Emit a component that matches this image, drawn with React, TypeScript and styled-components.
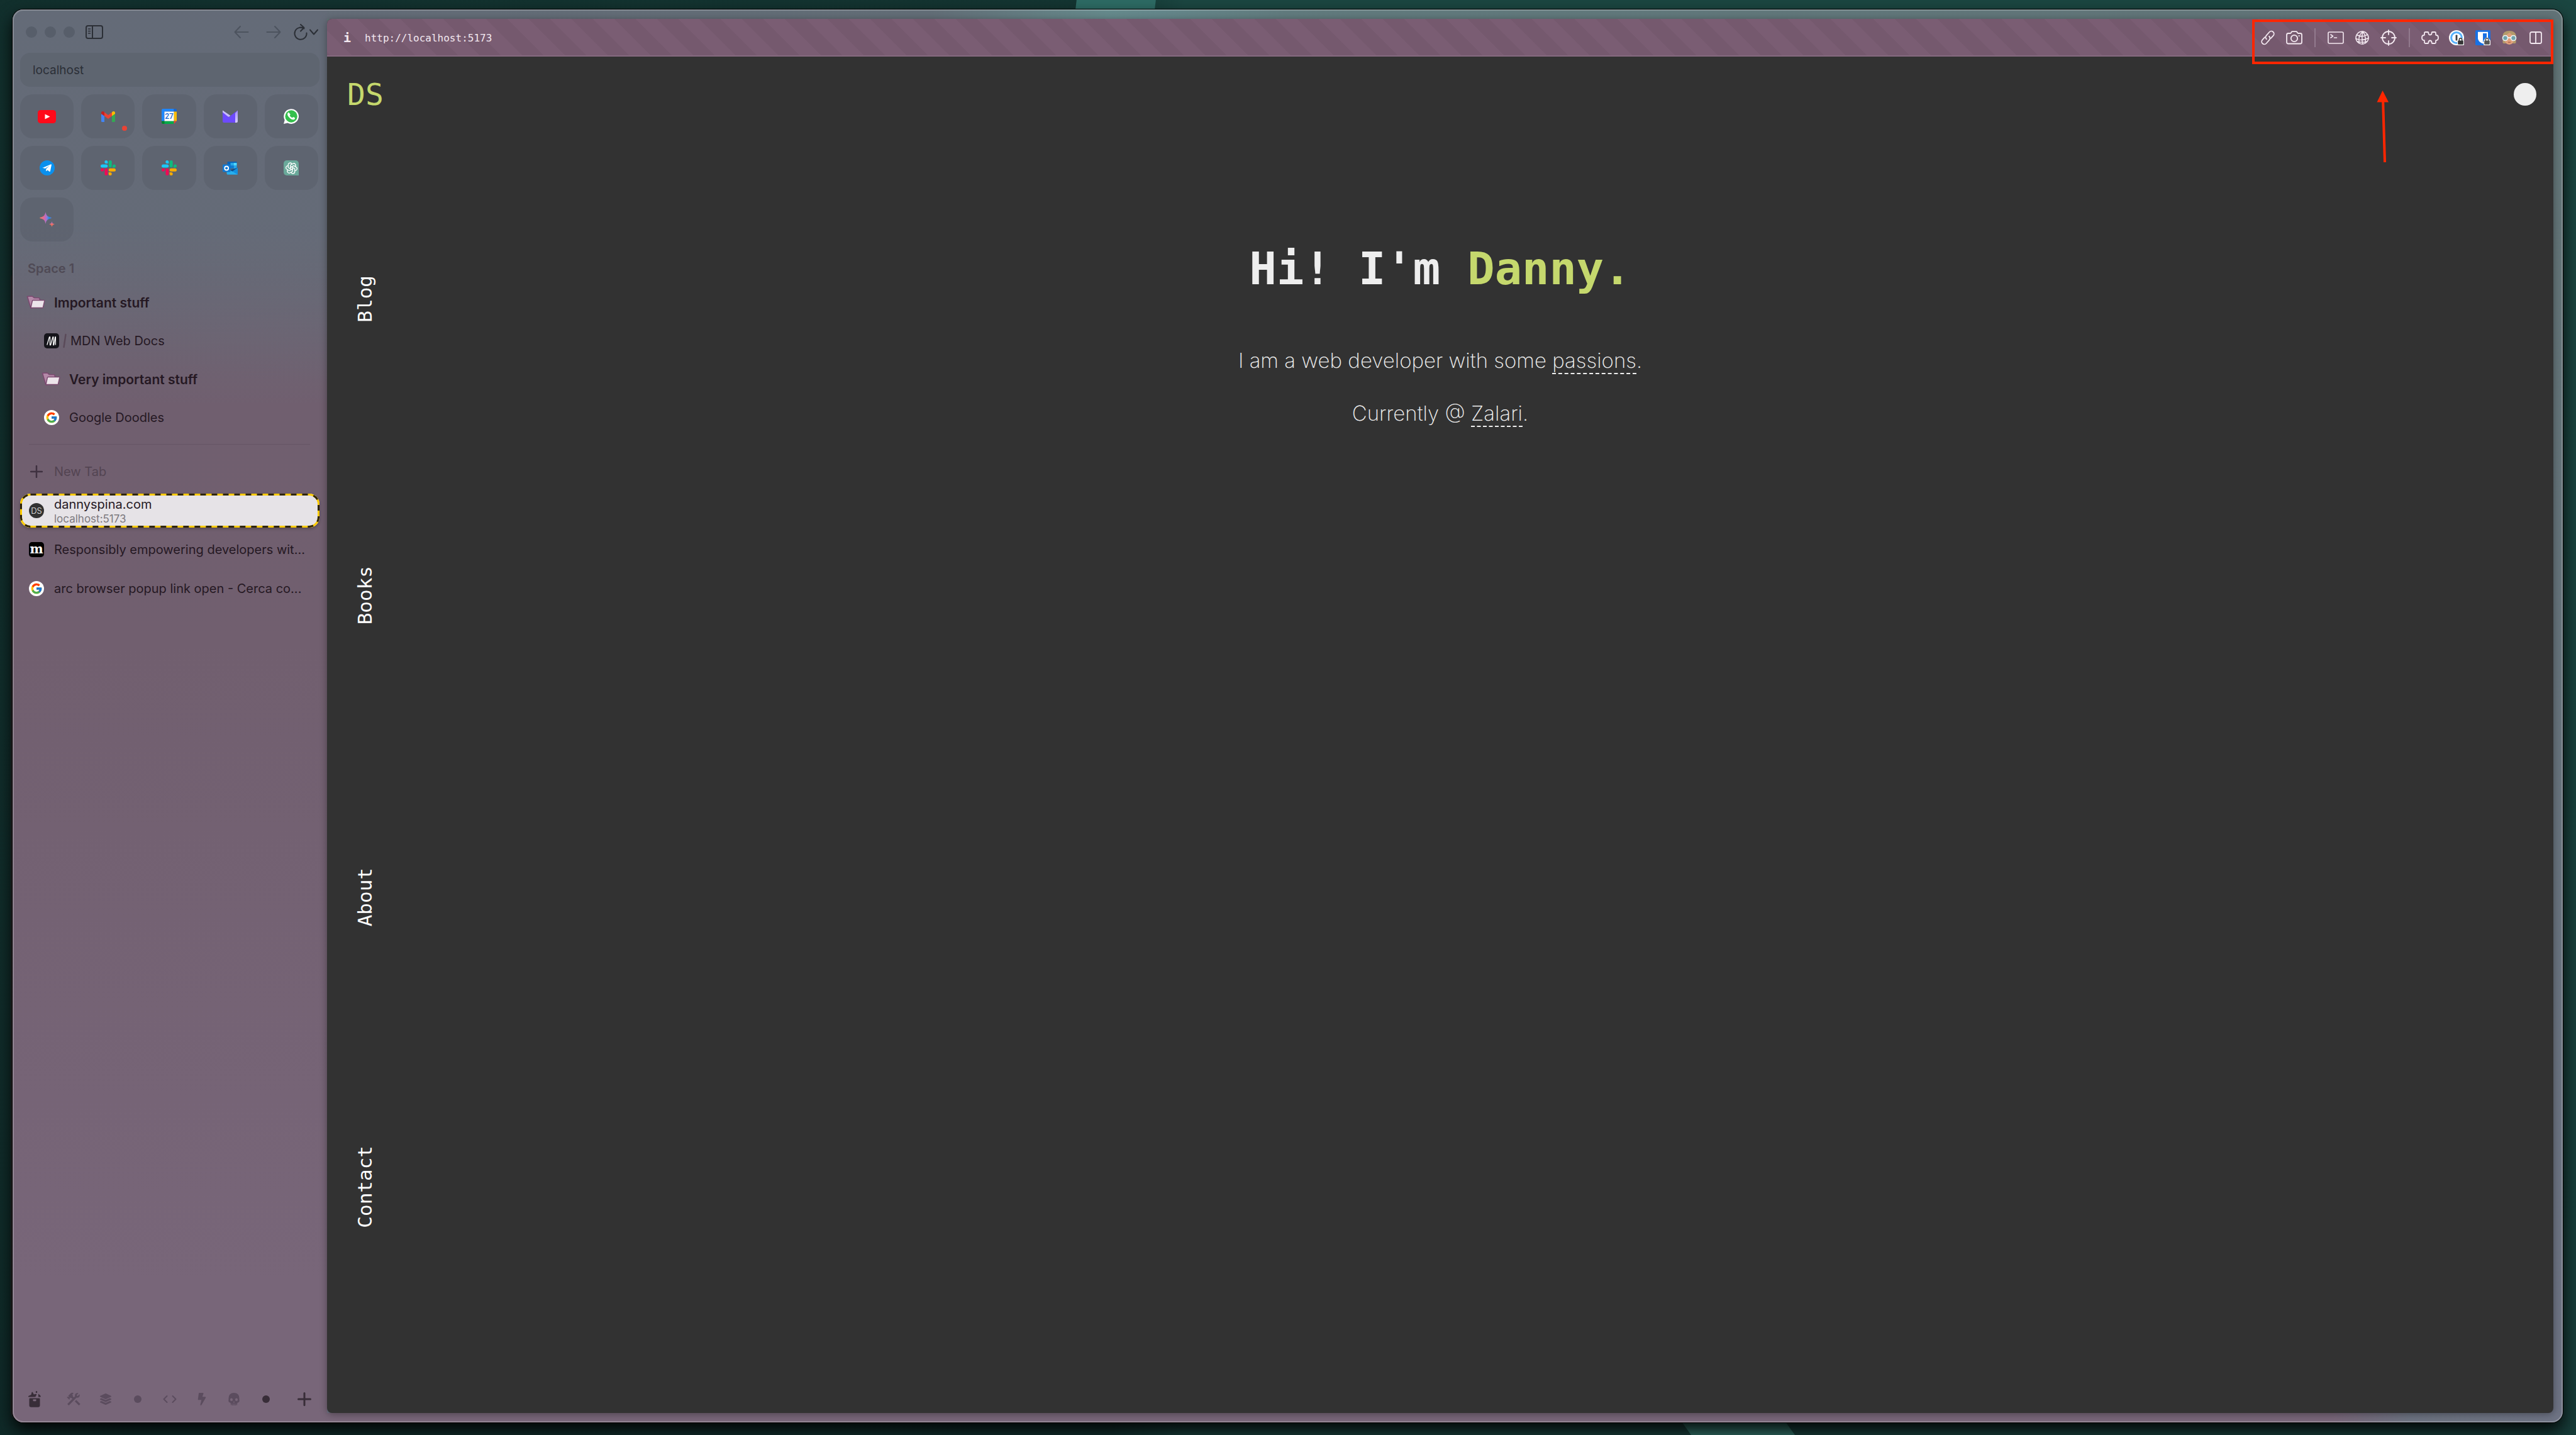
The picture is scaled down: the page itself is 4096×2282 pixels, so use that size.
import React from "react";
import styled, { createGlobalStyle, css } from "styled-components";
import { FcGoogle } from "react-icons/fc";
import { MdConstruction } from "react-icons/md";
import { FaBolt, FaLayerGroup } from "react-icons/fa";
import { TbBrandOpenai } from "react-icons/tb";

const SANS = `Inter, "Noto Sans", sans-serif`;
const MONO = `"DejaVu Sans Mono", "Liberation Mono", monospace`;
const LIME = "#c5d86d";

const GlobalStyle = createGlobalStyle`
  *, *::before, *::after { box-sizing: border-box; }
  body { margin: 0; font-family: ${SANS}; -webkit-font-smoothing: antialiased; }
  button, input { font: inherit; color: inherit; border: 0; padding: 0; margin: 0; background: none; outline: none; }
  a { color: inherit; text-decoration: none; }
  svg { display: block; flex: none; }
`;

/* ---------- Desktop and window ---------- */

const Desktop = styled.div`
  position: relative;
  display: flex;
  height: 100vh;
  padding: 15px 21px 20px 20px;
  overflow: hidden;
  background:
    linear-gradient(to right, rgba(6, 20, 20, 0.45), rgba(6, 20, 20, 0.35) 43%, transparent 46%),
    linear-gradient(to bottom, #1b4641, #173b38);
`;

const Wallpaper = styled.svg`
  position: absolute;
  inset: 0;
  width: 100%;
  height: 100%;
`;

const WindowBehind = styled.div`
  position: absolute;
  left: 17px;
  top: 428px;
  bottom: 22px;
  width: 60px;
  border-radius: 16px;
  border: 2px solid #2a2d2d;
  background: #000;
`;

const Window = styled.div`
  position: relative;
  display: flex;
  flex: 1;
  min-width: 0;
  padding: 15px 15px 15px 0;
  border-radius: 17px;
  background:
    linear-gradient(to right, #646b77, #626d76 36%, #65898b 43%, #64868a 45%, #617a7d 50%, #617276) top / 100% 15px no-repeat,
    linear-gradient(to right, #786679 91%, #6c7280 94%, #6e7384) bottom / 100% 15px no-repeat,
    linear-gradient(to bottom, #617475, #647279 40%, #6d7283);
  box-shadow: 0 0 0 1px #000, 0 12px 26px rgba(0, 0, 0, 0.9);

  &::after {
    content: "";
    position: absolute;
    inset: 0;
    border-radius: inherit;
    box-shadow: inset 0 0 0 2px rgba(255, 255, 255, 0.22);
    pointer-events: none;
  }
`;

/* ---------- Sidebar ---------- */

const Sidebar = styled.aside`
  display: flex;
  flex-direction: column;
  width: 500px;
  flex: none;
  margin: -15px 0;
  padding: 8px 12px 7px;
  border-radius: 17px 0 0 17px;
  color: #251823;
  font-size: 20px;
  background:
    linear-gradient(8deg, transparent 74%, rgba(100, 107, 120, 0.5) 84%),
    linear-gradient(to bottom, #646b77, #656b77 15%, #6c6573 22%, #705f6f 28%, #715f6f 45%, #786679 90%);
`;

const WindowBar = styled.header`
  display: flex;
  align-items: center;
  height: 56px;
  padding: 0 1px 0 9px;
  color: #2b2f36;
`;

const Lights = styled.div`
  display: flex;
  gap: 12px;
  margin-right: 17px;
`;

const Light = styled.span`
  width: 18px;
  height: 18px;
  border-radius: 50%;
  background: #575e6a;
`;

const IconButton = styled.button<{ $dim?: boolean }>`
  display: flex;
  align-items: center;
  justify-content: center;
  color: ${(p) => (p.$dim ? "#4c535e" : "inherit")};
`;

const History = styled.div`
  display: flex;
  align-items: center;
  margin-left: auto;
`;

const HistoryButton = styled(IconButton)`
  width: 24px;
  height: 28px;
  margin-right: 27px;

  & + & { margin-right: 18px; }
`;

const AddressBox = styled.input`
  height: 54px;
  margin-top: 5px;
  padding: 0 20px;
  border-radius: 16px;
  font-size: 19px;
  color: #2b2f37;
  background: #5e6570;
`;

const Pinned = styled.div`
  display: grid;
  grid-template-columns: repeat(5, 1fr);
  grid-auto-rows: 70px;
  gap: 12px;
  margin: 12px 2px 0 0;
`;

const Tile = styled.button`
  position: relative;
  display: flex;
  align-items: center;
  justify-content: center;
  border-radius: 20px;
  background: rgba(84, 88, 100, 0.36);
`;

const Badge = styled.span`
  position: absolute;
  right: 12px;
  bottom: 12px;
  width: 8px;
  height: 8px;
  border-radius: 50%;
  background: #ea4335;
`;

const SpaceName = styled.h2`
  margin: 16px 0 0;
  padding-left: 12px;
  font-size: 20px;
  font-weight: 600;
  line-height: 54px;
  color: #4f4a55;
`;

const List = styled.nav<{ $gap: number }>`
  display: flex;
  flex-direction: column;
  gap: ${(p) => p.$gap}px;
`;

const Divider = styled.hr`
  width: 447px;
  height: 1px;
  margin: 15px 14px 16px;
  border: 0;
  background: #655465;
`;

const row = css`
  position: relative;
  display: flex;
  align-items: center;
  height: 54px;
  padding: 0 14px;
  text-align: left;
  white-space: nowrap;
`;

const Row = styled.a<{ $indent?: boolean; $gap?: number }>`
  ${row}
  gap: ${(p) => p.$gap ?? 16}px;
  padding-left: ${(p) => (p.$indent ? 38 : 14)}px;
`;

const FolderRow = styled.button<{ $indent?: boolean }>`
  ${row}
  gap: 16px;
  padding-left: ${(p) => (p.$indent ? 38 : 14)}px;
  font-size: 21px;
  font-weight: 600;
`;

const NewTabRow = styled.button`
  ${row}
  gap: 16px;
  color: #534452;
`;

const ActiveRow = styled(Row)`
  border-radius: 16px;
  background: #e6e3e7;
  box-shadow: 0 2px 4px rgba(0, 0, 0, 0.25);
`;

const DashFrame = styled.svg`
  position: absolute;
  inset: 0;
  width: 100%;
  height: 100%;

  rect {
    x: 1.5px;
    y: 1.5px;
    width: calc(100% - 3px);
    height: calc(100% - 3px);
    rx: 15px;
    fill: none;
    stroke-width: 3px;
  }
`;

const IconSlot = styled.span`
  display: flex;
  align-items: center;
  justify-content: center;
  width: 24px;
  height: 24px;
  flex: none;
`;

const Round = styled(IconSlot)<{ $bg: string }>`
  border-radius: 50%;
  background: ${(p) => p.$bg};
  color: #eee;
  font-size: 13px;
  font-weight: 300;
`;

const MediumMark = styled(IconSlot)`
  border-radius: 5px;
  background: #000;
  color: #fff;
  font: bold 20px/20px "DejaVu Serif", serif;
  padding-bottom: 3px;
`;

const TwoLines = styled.span`
  display: flex;
  flex-direction: column;
`;

const TabTitle = styled.span`
  line-height: 26px;
  color: #251823;
`;

const TabHost = styled.span`
  font-size: 17px;
  line-height: 20px;
  color: #7d7a7f;
`;

const SpacesBar = styled.footer`
  display: flex;
  align-items: center;
  height: 60px;
  margin-top: auto;
  padding: 0 13px;
  color: #382d38;
`;

const Spaces = styled.div`
  display: flex;
  flex: 1;
  align-items: center;
  justify-content: space-between;
  margin: 0 38px 0 40px;
`;

const SpaceButton = styled.button<{ $active?: boolean }>`
  display: flex;
  align-items: center;
  justify-content: center;
  width: 24px;
  height: 28px;
  color: ${(p) => (p.$active ? "#382d38" : "#5b4c5e")};
`;

const Dot = styled.span`
  width: 12px;
  height: 12px;
  border-radius: 50%;
  background: currentColor;
`;

/* ---------- Page area ---------- */

const Content = styled.main`
  position: relative;
  display: flex;
  flex-direction: column;
  flex: 1;
  min-width: 0;
  border-radius: 8px;
  background: #323232;
  box-shadow: 0 2px 12px rgba(0, 0, 0, 0.35);
`;

const Toolbar = styled.header`
  display: flex;
  align-items: center;
  height: 60px;
  padding: 0 16px 0 20px;
  border-radius: 8px 8px 0 0;
  color: #f3e8f0;
  background: repeating-linear-gradient(45deg, #75596e 0 5px, #7a5d73 5px 29px, #75596e 29px 48px);
  box-shadow: inset 0 -2px 0 #866a80;
`;

const InfoButton = styled.button`
  width: 24px;
  margin-right: 16px;
  font: bold 20px/28px ${MONO};
`;

const AddressField = styled.input`
  flex: 1;
  min-width: 0;
  height: 40px;
  font-family: ${MONO};
  font-size: 16px;
  color: #f3e8f0;
`;

const Tools = styled.div`
  display: flex;
  align-items: center;
  gap: 18px;
`;

const Tool = styled.button`
  display: flex;
  align-items: center;
  justify-content: center;
  width: 24px;
  height: 30px;
`;

const ToolDivider = styled.span`
  width: 2px;
  height: 30px;
  margin: 0 2px;
  background: #927a8e;
`;

const Highlight = styled.div`
  position: absolute;
  top: 1px;
  right: 0;
  width: 479px;
  height: 71px;
  border: 4px solid #ff2600;
  pointer-events: none;
`;

const Pointer = styled.svg`
  position: absolute;
  top: 114px;
  right: 259px;
`;

const SiteHeader = styled.div`
  display: flex;
  align-items: center;
  justify-content: space-between;
  height: 120px;
  padding: 0 27px 0 32px;
`;

const Brand = styled.a`
  font: 48px/56px ${MONO};
  color: ${LIME};
`;

const ThemeSwitch = styled.button`
  width: 36px;
  height: 36px;
  border-radius: 50%;
  background: #eee;
`;

const SiteBody = styled.div`
  display: grid;
  grid-template-columns: 120px 1fr 120px;
  flex: 1;
`;

const SiteNav = styled.nav`
  display: grid;
  grid-template-rows: repeat(4, 1fr);
  padding: 0 0 117px 42px;
`;

const NavLink = styled.a`
  align-self: end;
  justify-self: start;
  margin-bottom: 177px;
  writing-mode: vertical-rl;
  transform: rotate(180deg);
  font: 31px/36px ${MONO};
  color: #fff;
`;

const Hero = styled.section`
  display: flex;
  flex-direction: column;
  align-items: center;
  padding-top: 175px;
  color: #eee;
`;

const Title = styled.h1`
  margin: 0 0 84px;
  font: bold 72px/84px ${MONO};
`;

const Accent = styled.span`
  color: ${LIME};
`;

const Lead = styled.p`
  margin: 0 0 44px;
  font-size: 33px;
  font-weight: 200;
  line-height: 40px;
`;

const InlineLink = styled.a`
  border-bottom: 2px dashed #eee;
`;

/* ---------- Drawings ---------- */

type Draw = { children: React.ReactNode; w?: number; h?: number; sw?: number };

const Line = ({ children, w = 24, h = 24, sw = 2 }: Draw) => (
  <svg width={w} height={h} viewBox={`0 0 ${w} ${h}`} fill="none" stroke="currentColor" strokeWidth={sw} strokeLinecap="round" strokeLinejoin="round" overflow="visible">
    {children}
  </svg>
);

const SidebarIcon = () => (
  <Line w={28} h={24} sw={2}>
    <rect x="1" y="2" width="26" height="20" rx="3" />
    <path d="M11 2v20" />
    <path d="M4.500 7h3M4.500 10.500h3M4.500 14h3" strokeWidth="1.500" />
  </Line>
);

const YouTube = () => (
  <svg width="29" height="21" viewBox="0 0 29 21">
    <rect width="29" height="21" rx="4.500" fill="#ff0a1a" />
    <path d="M11.500 6.400v8.200l8-4.100z" fill="#fff" />
  </svg>
);

const Gmail = () => (
  <svg width="22" height="17" viewBox="0 0 22 17">
    <path d="M0 4v11.500A1.500 1.500 0 0 0 1.500 17H5V7z" fill="#4285f4" />
    <path d="M22 4v11.500a1.500 1.500 0 0 1-1.500 1.500H17V7z" fill="#34a853" />
    <path d="M0 3.500V2.400A2.400 2.400 0 0 1 4 .6L5 1.400V7.500L0 3.900z" fill="#c5221f" />
    <path d="M22 3.500V2.400A2.400 2.400 0 0 0 18 .6L17 1.400V7.500L22 3.900z" fill="#fbbc04" />
    <path d="M5 7.500V1.400l6 4.600 6-4.600v6.100L11 12z" fill="#ea4335" />
  </svg>
);

const Calendar = () => (
  <svg width="24" height="24" viewBox="0 0 24 24">
    <path d="M0 2a2 2 0 0 1 2-2h17.500v4.500h-15v15H0z" fill="#1f87fc" />
    <path d="M19.500 0H22a2 2 0 0 1 2 2v2.500h-4.500z" fill="#1767d2" />
    <path d="M19.500 4.500H24v15h-4.500z" fill="#fbbc04" />
    <path d="M4.500 19.500h15V24h-15z" fill="#00ac47" />
    <path d="M0 19.500h4.500V24H2a2 2 0 0 1-2-2z" fill="#00832d" />
    <path d="M19.500 24v-4.500H24z" fill="#ea4335" />
    <path d="M4.500 4.500h15v15h-15z" fill="#fff" />
    <text x="12" y="16" textAnchor="middle" fontFamily="Roboto, sans-serif" fontSize="12" fontWeight="500" fill="#1967d2">27</text>
  </svg>
);

const Mail = () => (
  <svg width="24" height="20" viewBox="0 0 24 20">
    <defs>
      <linearGradient id="mail" x1="0" y1="0" x2="0" y2="1">
        <stop offset="0" stopColor="#a48cff" />
        <stop offset="1" stopColor="#d6ccff" />
      </linearGradient>
    </defs>
    <path d="M19 5.500 24 .5V18a2 2 0 0 1-2 2h-3z" fill="url(#mail)" />
    <path d="M0 1l10 9.500q1.500 1 3-.3l7-6.700V20H2a2 2 0 0 1-2-2z" fill="#6d4aff" />
    <path d="M0 .5 12.500 9 10.300 10.800Q9 11 8 10L0 3.500z" fill="#c9bdff" />
    <path d="M12 9.500 24 .5l-5 5.500-6.500 5z" fill="#6d4aff" />
  </svg>
);

const WhatsApp = () => (
  <svg width="24" height="24" viewBox="0 0 24 24">
    <path d="M0 24l1.700-6.100A11.900 11.900 0 1 1 6.300 22.500z" fill="#fff" />
    <circle cx="12.100" cy="12" r="9.700" fill="#35bf4d" />
    <path d="M8.700 6.400c-.4-.8-1.500-.7-2 .1-1.500 2.200-.2 4.800 1.900 7.100 2.400 2.600 5.600 4.700 8.300 3.300 1.100-.6 1.600-2 .9-2.600l-2-1.100c-.7-.4-1.300.9-2 1.100-1.500-.2-3.800-2.300-4.100-3.700.2-.7 1.200-1.200.9-1.900z" fill="#fff" />
  </svg>
);

const Telegram = () => (
  <svg width="24" height="24" viewBox="0 0 24 24">
    <circle cx="12" cy="12" r="12" fill="#0a90ee" />
    <path d="M4.500 12 18 6.300c.6-.2 1 .2.900.9l-2 10c-.2.800-.8.900-1.400.5l-3-2.200-1.600 1.600c-.4.300-.7 0-.8-.5l.2-3 5.500-5-7 4.400-3.800-1c-.6-.2-.6-.6-.5-1z" fill="#fff" />
  </svg>
);

const Slack = () => (
  <svg width="24" height="24" viewBox="0 0 24 24">
    <g fill="#1cc8f8">
      <path d="M8.800 0a2.500 2.500 0 0 1 2.500 2.500v2.500H8.800a2.500 2.500 0 0 1 0-5z" />
      <rect x="0" y="6.400" width="11.300" height="5" rx="2.500" />
    </g>
    <g fill="#0fbb7d">
      <path d="M24 8.900a2.500 2.500 0 0 1-2.500 2.500H19V8.900a2.500 2.500 0 0 1 5 0z" />
      <rect x="12.700" y="0" width="5" height="11.300" rx="2.500" />
    </g>
    <g fill="#f7ab00">
      <path d="M15.200 24a2.500 2.500 0 0 1-2.500-2.500V19h2.500a2.500 2.500 0 0 1 0 5z" />
      <rect x="12.700" y="12.700" width="11.300" height="5" rx="2.500" />
    </g>
    <g fill="#ee0a56">
      <path d="M0 15.200a2.500 2.500 0 0 1 2.500-2.500h2.500v2.500a2.500 2.500 0 0 1-5 0z" />
      <rect x="6.400" y="12.700" width="5" height="11.300" rx="2.500" />
    </g>
  </svg>
);

const Outlook = () => (
  <svg width="24" height="21" viewBox="0 0 24 21">
    <path d="M7.500 0h15v10h-15z" fill="#0a64b8" />
    <path d="M12.500 2h5v4.500h-5z" fill="#28a8ea" />
    <path d="M17.500 2h5v4.500h-5z" fill="#50d9ff" />
    <path d="M17.500 6.500h5V11h-5z" fill="#28a8ea" />
    <path d="M12.500 6.500h5V11h-5z" fill="#0f7bd0" />
    <path d="M24 9.500v11H7z" fill="#1490df" />
    <path d="M6.500 10.500 24 20.500H8a1.500 1.500 0 0 1-1.500-1.500z" fill="#28b0ee" />
    <path d="M12 13.500 24 9.500l-8.500 6z" fill="#0a4f93" />
    <rect y="4.500" width="12.500" height="12" rx="1" fill="#0f78d4" />
    <circle cx="6.200" cy="10.500" r="3" fill="none" stroke="#fff" strokeWidth="1.800" />
  </svg>
);

const OpenAITile = styled.span`
  display: flex;
  align-items: center;
  justify-content: center;
  width: 24px;
  height: 24px;
  border-radius: 5px 5px 0 5px;
  background: #6aa99a;
  color: #fff;
`;

const Sparkles = () => (
  <svg width="24" height="24" viewBox="0 0 24 24">
    <defs>
      <linearGradient id="spark">
        <stop offset="0" stopColor="#f4805a" />
        <stop offset="0.350" stopColor="#e0669c" />
        <stop offset="0.600" stopColor="#9a78d8" />
        <stop offset="0.820" stopColor="#1294ea" />
        <stop offset="1" stopColor="#5f7ce8" />
      </linearGradient>
      <linearGradient id="spark2" x1="0" y1="0" x2="0" y2="1">
        <stop offset="0" stopColor="#a06fe0" />
        <stop offset="0.600" stopColor="#f0705c" />
      </linearGradient>
    </defs>
    <path d="M9.500 0c.8 5 2.200 7.300 8.500 8.700q1.500.8 0 1.600c-6 1.400-7.500 3.500-8.500 8.700-1-5-2.200-7.300-8.500-8.700q-1.500-.8 0-1.600C7 7.300 8.500 5 9.500 0z" fill="url(#spark)" />
    <path d="M19.500 15c.6 2.800 1.400 3.700 4.500 4.500-3 .8-3.900 1.700-4.500 4.500-.6-2.800-1.400-3.700-4.500-4.500 3-.8 3.900-1.700 4.500-4.500z" fill="url(#spark2)" />
  </svg>
);

const Folder = () => (
  <svg width="32" height="24" viewBox="0 0 32 24">
    <path d="M1.500 2.500 8 2q2 0 3 1.500 1 1.300 3 1.200l5 .1q2 0 2.300 2V9L9 21H7Z" fill="#b489a8" stroke="#7b4a70" strokeWidth="1.600" strokeLinejoin="round" />
    <path d="M10.500 8.500h17.500q1 0 .8 1l-2.300 10q-.3 1-1.300 1H8q-1 0-.8-1l2.200-10q.2-1 1.100-1z" fill="#ece4ea" stroke="#7b4a70" strokeWidth="1.400" />
  </svg>
);

const Mdn = () => (
  <svg width="24" height="24" viewBox="0 0 24 24">
    <rect width="24" height="24" rx="5" fill="#15141a" />
    <path d="M4.800 18.500 8.500 6h1v12.500h1L14 6h.8v12.500h.8L17.800 6h.6v12.500" fill="none" stroke="#fff" strokeWidth="1.300" />
  </svg>
);

const Slash = () => (
  <svg width="6" height="24" viewBox="0 0 6 24">
    <path d="M4.500 2 1.500 22" stroke="#5a4a59" strokeWidth="2.400" strokeLinecap="round" />
  </svg>
);

const Google = () => (
  <Round $bg="#fff">
    <FcGoogle size={20} />
  </Round>
);

const Archive = () => (
  <svg width="20" height="26" viewBox="0 0 20 26" fill="currentColor">
    <path d="M1 9.500q-1.500 0-.8-1.500L4.500 6 5.500 2q.6-1.200 1.500 0l1.800 3.500 3.500-.8q1 0 .7 1.300L12 8q-.5 1.500-1.500 1.500zM16 9.300V5.500q.3-1.500 1-.3l2.500 2.600q.8 1.700-.5 1.700h-2q-1 0-1-.2zM13 0q1.300 0 1.300 1.600t-1.300 1.600-1.300-1.600T13 0z" />
    <path fillRule="evenodd" d="M2.500 11.500h15q1 0 1 1.200v10q0 3-3 3h-11q-3 0-3-3v-10q0-1.200 1-1.200zm5 1.800v2q0 1 1 1h3q1 0 1-1v-2z" />
  </svg>
);

const Skull = () => (
  <svg width="18" height="20" viewBox="0 0 18 20" fill="currentColor">
    <path
      fillRule="evenodd"
      d="M9 0q8.500 0 8.500 9 0 2.500 .2 4-.2 2-2.700 2.500-1 .5-1 2.500v1.500h-1.400V17h-.8v3h-1.400v-3h-.8v3H8.400v-3h-.8v3H6.200v-3h-.8v2.500H4V18q0-2-1-2.500Q.5 15 .3 13q.2-1.500.2-4Q.500 0 9 0zM5 8.500a2.100 2.300 0 1 0 0 4.600 2.100 2.300 0 0 0 0-4.600zm8 0a2.100 2.300 0 1 0 0 4.600 2.100 2.300 0 0 0 0-4.600zM9 13l-1.200 2.500h2.400z"
    />
  </svg>
);

const LockBadge = ({ color }: { color: string }) => (
  <g transform="translate(13 11.500)">
    <path d="M0 5.500Q0 3.500 2 3a3.600 3.600 0 0 1 7 0q2 .5 2 2.500v6q0 1-1 1H1q-1 0-1-1z" fill="#f5f5f5" />
    <rect x="1.200" y="5" width="8.600" height="6.200" rx="1" fill={color} />
    <path d="M3.300 5.500V3.500a2.200 2.200 0 0 1 4.400 0v2" fill="none" stroke={color} strokeWidth="1.400" />
  </g>
);

const OnePassword = () => (
  <svg width="24" height="24" viewBox="0 0 24 24">
    <circle cx="12" cy="12" r="12" fill="#fff" />
    <circle cx="12" cy="12" r="8.400" fill="none" stroke="#56b0fb" strokeWidth="3" />
    <rect x="10.600" y="7.500" width="2.800" height="9" rx=".8" fill="#3e3e42" />
    <LockBadge color="#333" />
  </svg>
);

const Bitwarden = () => (
  <svg width="24" height="24" viewBox="0 0 24 24">
    <rect width="24" height="24" rx="1.500" fill="#1871e4" />
    <path d="M4 2.800h16V13q0 5-8 8.500Q4 18 4 13z" fill="#fff" />
    <path d="M12 5h6v8q0 3-6 6z" fill="#1871e4" />
    <LockBadge color="#555" />
  </svg>
);

const Avatar = () => (
  <svg width="24" height="24" viewBox="0 0 24 24">
    <path d="M1.500 20V9Q2 1 12 1t10.500 8v11q-1 1.500-3 1H4.500q-2 .5-3-1z" fill="#b39a6b" />
    <path d="M4.500 12Q6 7.500 12.500 4q4 3 6.500 8 .5 11-7 11T4.500 12z" fill="#e0a07c" />
    <path d="M10 18.800q2 1 4 0" stroke="#b5604c" strokeWidth="1.300" fill="none" />
    <g fill="#6fa3ab" stroke="#eef4f5" strokeWidth="1.600">
      <circle cx="5.500" cy="12.500" r="4" />
      <circle cx="18.500" cy="12.500" r="4" />
    </g>
    <path d="M9.500 12h5" stroke="#eef4f5" strokeWidth="1.800" />
  </svg>
);

/* ---------- Data ---------- */

const pinned: { name: string; icon: React.ReactNode; unread?: boolean }[] = [
  { name: "YouTube", icon: <YouTube /> },
  { name: "Gmail", icon: <Gmail />, unread: true },
  { name: "Calendar", icon: <Calendar /> },
  { name: "Proton Mail", icon: <Mail /> },
  { name: "WhatsApp", icon: <WhatsApp /> },
  { name: "Telegram", icon: <Telegram /> },
  { name: "Slack", icon: <Slack /> },
  { name: "Slack", icon: <Slack /> },
  { name: "Outlook", icon: <Outlook /> },
  { name: "ChatGPT", icon: <OpenAITile><TbBrandOpenai size={21} strokeWidth={1.5} /></OpenAITile> },
  { name: "Sparkles", icon: <Sparkles /> },
];

const spaces: { name: string; icon: React.ReactNode; active?: boolean }[] = [
  { name: "Tools", icon: <MdConstruction size={26} /> },
  { name: "Stack", icon: <FaLayerGroup size={18} /> },
  { name: "Personal", icon: <Dot /> },
  { name: "Code", icon: <Line w={22} h={16} sw={2}><path d="M6.500 3 1.500 8l5 5M15.500 3l5 5-5 5" /></Line> },
  { name: "Energy", icon: <FaBolt size={20} /> },
  { name: "Skull", icon: <Skull /> },
  { name: "Space 1", icon: <Dot />, active: true },
];

const sections = ["Blog", "Books", "About", "Contact"];

const devTools: { name: string; icon: React.ReactNode }[] = [
  {
    name: "Console",
    icon: (
      <Line w={26} h={20} sw={1.600}>
        <rect x="1" y="1" width="24" height="18" rx="2" />
        <path d="M5 5l3.500 2.500L5 10M10.500 10h4" />
      </Line>
    ),
  },
  {
    name: "Network",
    icon: (
      <Line w={22} h={22} sw={1.500}>
        <circle cx="11" cy="11" r="10" />
        <path d="M12 1C7 5 4.500 11 6.500 19.500M12 1c-1.500 6-1.500 13 0 20M12 1c4 5 5 11 4 18M2.500 6.500Q11 11 19.500 6M1 12.500q10 4.500 20-1M3.500 17q8 2.500 15 0" />
      </Line>
    ),
  },
  {
    name: "Inspect",
    icon: (
      <Line w={26} h={26} sw={1.800}>
        <circle cx="13" cy="13" r="10" />
        <path d="M13 1v7M13 18v7M1 13h7M18 13h7" />
      </Line>
    ),
  },
];

/* ---------- App ---------- */

export default function App() {
  return (
    <Desktop>
      <GlobalStyle />
      <Wallpaper viewBox="0 0 4096 2282" preserveAspectRatio="none" aria-hidden="true">
        <path d="M1713 -10h126l-7 60h-126z" fill="#2d6b64" />
        <path d="M2666 2250h165l36 50h-165z" fill="#2f6b62" />
      </Wallpaper>
      <WindowBehind />
      <Window>
        <Sidebar>
          <WindowBar>
            <Lights>
              <Light />
              <Light />
              <Light />
            </Lights>
            <IconButton aria-label="Toggle sidebar">
              <SidebarIcon />
            </IconButton>
            <History>
              <HistoryButton aria-label="Back" $dim>
                <Line w={24} h={20}><path d="M22.500 10H1.500M10 1 1.500 10l8.500 9" /></Line>
              </HistoryButton>
              <HistoryButton aria-label="Forward" $dim>
                <Line w={24} h={20}><path d="M1.500 10h21M14 1l8.500 9-8.500 9" /></Line>
              </HistoryButton>
              <IconButton aria-label="Reload">
                <Line w={26} h={28}>
                  <path d="M18.500 8.500A9.500 9.500 0 1 0 22.500 15.500M13 2l5.500 5-5.500 5.500M18 7.200l-6-.7" />
                </Line>
              </IconButton>
              <IconButton aria-label="Reload options">
                <Line w={16} h={10}><path d="M2 1.500l6 7 6-7" /></Line>
              </IconButton>
            </History>
          </WindowBar>

          <AddressBox aria-label="Address" defaultValue="localhost" />

          <Pinned>
            {pinned.map((p, i) => (
              <Tile key={i} aria-label={p.name}>
                {p.icon}
                {p.unread && <Badge />}
              </Tile>
            ))}
          </Pinned>

          <SpaceName>Space 1</SpaceName>

          <List $gap={7} aria-label="Pinned tabs">
            <FolderRow>
              <IconSlot><Folder /></IconSlot>
              Important stuff
            </FolderRow>
            <Row href="#mdn" $indent $gap={6}>
              <IconSlot><Mdn /></IconSlot>
              <Slash />
              MDN Web Docs
            </Row>
            <FolderRow $indent>
              <IconSlot><Folder /></IconSlot>
              Very important stuff
            </FolderRow>
            <Row href="#doodles" $indent>
              <Google />
              Google Doodles
            </Row>
          </List>

          <Divider />

          <List $gap={8} aria-label="Open tabs">
            <NewTabRow>
              <IconSlot>
                <svg width="20" height="20" viewBox="0 0 20 20">
                  <path d="M10 1v18M1 10h18" stroke="#3f3140" strokeWidth="2.500" strokeLinecap="round" />
                </svg>
              </IconSlot>
              New Tab
            </NewTabRow>
            <ActiveRow href="#dannyspina">
              <DashFrame>
                <rect stroke="#ffcb00" />
                <rect stroke="#2f2508" strokeDasharray="9 9" />
              </DashFrame>
              <Round $bg="#323232">DS</Round>
              <TwoLines>
                <TabTitle>dannyspina.com</TabTitle>
                <TabHost>localhost:5173</TabHost>
              </TwoLines>
            </ActiveRow>
            <Row href="#responsibly">
              <MediumMark>m</MediumMark>
              Responsibly empowering developers wit...
            </Row>
            <Row href="#search">
              <Google />
              arc browser popup link open - Cerca co...
            </Row>
          </List>

          <SpacesBar>
            <IconButton aria-label="Library">
              <Archive />
            </IconButton>
            <Spaces>
              {spaces.map((s) => (
                <SpaceButton key={s.name} aria-label={s.name} $active={s.active}>
                  {s.icon}
                </SpaceButton>
              ))}
            </Spaces>
            <IconButton aria-label="New space">
              <Line w={22} h={22} sw={3}><path d="M11 1.500v19M1.500 11h19" /></Line>
            </IconButton>
          </SpacesBar>
        </Sidebar>

        <Content>
          <Toolbar>
            <InfoButton aria-label="Site information">i</InfoButton>
            <AddressField aria-label="Page address" defaultValue="http://localhost:5173" />
            <Tools>
              <Tool aria-label="Copy link">
                <Line w={24} h={24} sw={1.800}>
                  <g transform="rotate(-48 12 12)">
                    <path d="M9.500 7.800H3.700a4.200 4.200 0 0 0 0 8.400H10.800a4.200 4.200 0 0 0 4.200-4.200" />
                    <path d="M14.500 16.200H20.300a4.200 4.200 0 0 0 0-8.400H13.200a4.200 4.200 0 0 0-4.200 4.200" />
                  </g>
                </Line>
              </Tool>
              <Tool aria-label="Capture">
                <Line w={26} h={22} sw={1.800}>
                  <path d="M3.500 4h3.200q.8 0 1.200-.8L8.600 2q.4-.8 1.400-.8h6q1 0 1.400.8l.7 1.200q.4.800 1.200.8h3.200Q25 4 25 6.500v11.500q0 2.500-2.500 2.500h-19Q1 20.500 1 18V6.500Q1 4 3.500 4z" />
                  <circle cx="13" cy="12" r="5.200" />
                  <circle cx="20.500" cy="8" r=".6" fill="currentColor" strokeWidth="1" />
                </Line>
              </Tool>
              <ToolDivider />
              {devTools.map((t) => (
                <Tool key={t.name} aria-label={t.name}>
                  {t.icon}
                </Tool>
              ))}
              <ToolDivider />
              <Tool aria-label="Extensions">
                <Line w={28} h={20} sw={1.800}>
                  <path d="M6.500 1h4q.8 0 .8.800 0 3.700 2.700 3.700t2.700-3.700q0-.8.8-.8h4q1.500 0 1.500 1.500v2.500q0 1 1 1 3 0 3 4t-3 4q-1 0-1 1v2.500q0 1.500-1.500 1.500h-4q-.8 0-.8-.8 0-3.700-2.700-3.700t-2.700 3.700q0 .8-.8.800h-4Q5 19 5 17.500V15q0-1-1-1-3 0-3-4t3-4q1 0 1-1V2.500Q5 1 6.500 1z" />
                </Line>
              </Tool>
              <Tool aria-label="1Password"><OnePassword /></Tool>
              <Tool aria-label="Bitwarden"><Bitwarden /></Tool>
              <Tool aria-label="Profile"><Avatar /></Tool>
              <Tool aria-label="Split view">
                <Line w={20} h={20} sw={1.800}>
                  <rect x="1" y="1" width="18" height="18" rx="2.500" />
                  <path d="M10 1v18" />
                </Line>
              </Tool>
            </Tools>
          </Toolbar>

          <SiteHeader>
            <Brand href="#home">DS</Brand>
            <ThemeSwitch aria-label="Switch theme" />
          </SiteHeader>

          <SiteBody>
            <SiteNav aria-label="Sections">
              {sections.map((s) => (
                <NavLink key={s} href={`#${s.toLowerCase()}`}>
                  {s}
                </NavLink>
              ))}
            </SiteNav>
            <Hero>
              <Title>
                Hi! I'm <Accent>Danny.</Accent>
              </Title>
              <Lead>
                I am a web developer with some <InlineLink href="#passions">passions</InlineLink>.
              </Lead>
              <Lead>
                Currently @ <InlineLink href="#zalari">Zalari</InlineLink>.
              </Lead>
            </Hero>
          </SiteBody>

          <Highlight />
          <Pointer width="22" height="116" viewBox="0 0 22 116" aria-hidden="true">
            <path d="M10 12 13 114" stroke="#ff2600" strokeWidth="4" />
            <path d="M9.500 0 19 18.500H0.500z" fill="#ff2600" />
          </Pointer>
        </Content>
      </Window>
    </Desktop>
  );
}
